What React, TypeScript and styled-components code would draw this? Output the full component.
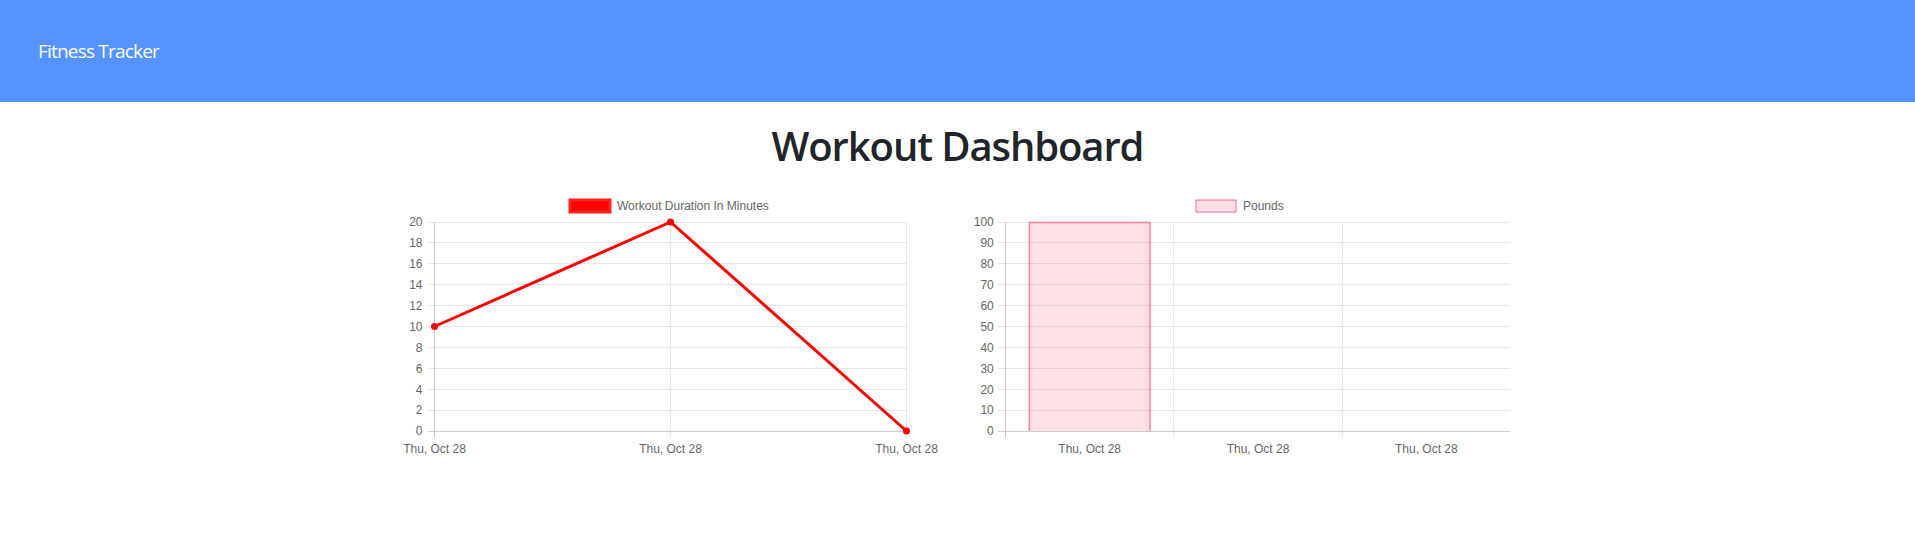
import React from "react";
import styled, { createGlobalStyle } from "styled-components";

const GlobalStyle = createGlobalStyle`
  html, body { margin: 0; padding: 0; background: #fff; }
  body { font-family: "Open Sans", "Noto Sans", sans-serif; color: #212529; }
`;

const Navbar = styled.nav`
  height: 102px;
  background: #5594ff;
  display: flex;
  align-items: center;
  padding-left: 38px;
  box-sizing: border-box;
`;

const Brand = styled.a`
  color: #fff;
  font-size: 19px;
  letter-spacing: -0.8px;
  line-height: 30px;
  text-decoration: none;
  font-family: "Open Sans", sans-serif;
`;

const Container = styled.main`
  width: 1110px;
  margin: 0 auto;
`;

const Title = styled.h1`
  text-align: center;
  font-size: 40px;
  line-height: 48px;
  font-weight: 600;
  letter-spacing: -1.1px;
  margin: 20px 0 18px;
  color: #212529;
`;

const ChartRow = styled.div`
  display: flex;
  gap: 30px;
  justify-content: center;
`;

const ChartSvg = styled.svg`
  display: block;
  width: 540px;
  height: 270px;
  font-family: "Liberation Sans", Arial, sans-serif;
  font-size: 12px;
`;

const GRID = "#e6e6e6";
const AXIS = "#cccccc";
const LABEL = "#666666";
const TOP = 34;
const BOTTOM = 243;
const crisp = (v: number) => Math.round(v - 0.5) + 0.5;

type YAxisProps = {
  ticks: number[];
  max: number;
  axisX: number;
  right: number;
  tickStart: number;
  labelX: number;
};

const yOf = (v: number, max: number) => BOTTOM - (v / max) * (BOTTOM - TOP);

const YAxis: React.FC<YAxisProps> = ({ ticks, max, axisX, right, tickStart, labelX }) => (
  <g>
    {ticks.map((t) => {
      const y = crisp(yOf(t, max));
      return (
        <g key={t}>
          <line x1={tickStart} x2={right} y1={y} y2={y} stroke={t === 0 ? AXIS : GRID} strokeWidth={1} />
          <text x={labelX} y={yOf(t, max) + 4.3} textAnchor="end" fill={LABEL}>
            {t}
          </text>
        </g>
      );
    })}
    <line x1={axisX} x2={axisX} y1={TOP} y2={250} stroke={AXIS} strokeWidth={1} />
  </g>
);

const LegendItem: React.FC<{ x: number; fill: string; stroke: string; sw: number; label: string }> = ({
  x,
  fill,
  stroke,
  sw,
  label,
}) => (
  <g>
    <rect x={x} y={12} width={40} height={12} fill={fill} stroke={stroke} strokeWidth={sw} />
    <text x={x + 47} y={22.3} fill={LABEL}>
      {label}
    </text>
  </g>
);

const DATE = "Thu, Oct 28";

const LineChart: React.FC = () => {
  const xs = [31.5, 267.5, 503.5];
  const vals = [10, 20, 0];
  const max = 20;
  const pts = xs.map((x, i) => [x, yOf(vals[i], max)] as const);
  return (
    <ChartSvg viewBox="0 0 540 270">
      <LegendItem x={167} fill="#ff0000" stroke="#ff2020" sw={3} label="Workout Duration In Minutes" />
      {xs.slice(1).map((x) => (
        <line key={x} x1={x} x2={x} y1={TOP} y2={250} stroke={GRID} strokeWidth={1} />
      ))}
      <YAxis ticks={[0, 2, 4, 6, 8, 10, 12, 14, 16, 18, 20]} max={max} axisX={31.5} right={503.5} tickStart={25.5} labelX={19.5} />
      {xs.map((x) => (
        <text key={x} x={x} y={264.5} textAnchor="middle" fill={LABEL}>
          {DATE}
        </text>
      ))}
      <polyline
        points={pts.map((p) => p.join(",")).join(" ")}
        fill="none"
        stroke="#ff0000"
        strokeWidth={3}
        strokeLinejoin="round"
      />
      {pts.map(([x, y]) => (
        <circle key={x} cx={x} cy={y} r={3.5} fill="#ff0000" />
      ))}
    </ChartSvg>
  );
};

const BarChart: React.FC = () => {
  const axisX = 32.5;
  const right = 537.5;
  const cw = (right - axisX) / 3;
  const max = 100;
  const centers = [0, 1, 2].map((i) => axisX + cw * (i + 0.5));
  const barW = 120.6;
  const bl = centers[0] - barW / 2;
  const br = centers[0] + barW / 2;
  const by = yOf(100, max) + 0.5;
  return (
    <ChartSvg viewBox="0 0 540 270">
      <LegendItem x={223} fill="#ffe0e6" stroke="#ff6384" sw={1} label="Pounds" />
      {[1, 2].map((i) => {
        const x = crisp(axisX + cw * i);
        return <line key={i} x1={x} x2={x} y1={TOP} y2={250} stroke={GRID} strokeWidth={1} />;
      })}
      <YAxis
        ticks={[0, 10, 20, 30, 40, 50, 60, 70, 80, 90, 100]}
        max={max}
        axisX={axisX}
        right={right}
        tickStart={24.5}
        labelX={20.8}
      />
      <rect x={bl} y={by} width={barW} height={BOTTOM - by} fill="rgba(255,99,132,0.2)" />
      <path
        d={`M${bl} ${BOTTOM} L${bl} ${by} L${br} ${by} L${br} ${BOTTOM}`}
        fill="none"
        stroke="rgba(255,99,132,0.8)"
        strokeWidth={1.5}
      />
      {centers.map((x) => (
        <text key={x} x={x} y={264.5} textAnchor="middle" fill={LABEL}>
          {DATE}
        </text>
      ))}
    </ChartSvg>
  );
};

export default function App() {
  return (
    <>
      <GlobalStyle />
      <Navbar>
        <Brand href="#">Fitness Tracker</Brand>
      </Navbar>
      <Container>
        <Title>Workout Dashboard</Title>
        <ChartRow>
          <LineChart />
          <BarChart />
        </ChartRow>
      </Container>
    </>
  );
}
